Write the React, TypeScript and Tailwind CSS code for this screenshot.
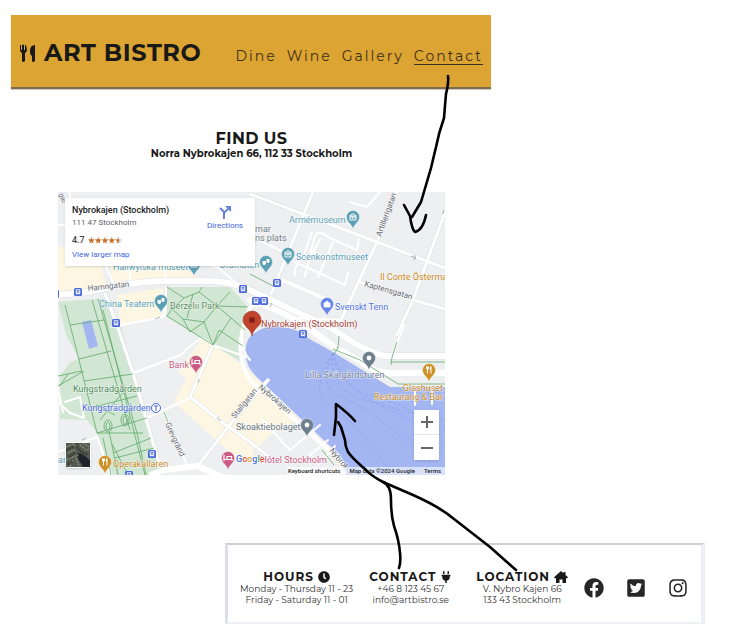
import React from "react";
import { FaClock, FaFacebook, FaInstagram, FaPlug, FaTwitterSquare } from "react-icons/fa";

const TEAL = "#5b9fb5";
const BLUE = "#4a68dd";
const GREY = "#6e7f8d";
const PINK = "#cb5c84";
const ORANGE = "#cf9027";

type PinProps = { x: number; y: number; color: string; kind: "museum" | "theatre" | "bed" | "food" | "dot" | "bag" };

function Pin({ x, y, color, kind }: PinProps) {
  return (
    <g transform={`translate(${x} ${y})`}>
      <path d="M0 12 C-1 7 -6.500 5 -6.500 0 A6.500 6.500 0 0 1 6.500 0 C6.500 5 1 7 0 12Z" fill={color} stroke="#fff" strokeWidth="0.400" />
      {kind === "museum" && <path d="M-3.500 -1 L0 -3.500 L3.500 -1Z M-3 0H3V3H-3Z M-1 1H1" fill="none" stroke="#fff" strokeWidth="1" />}
      {kind === "theatre" && <path d="M-3.500 -1H0V2Q-2 4 -3.500 2Z M0.500 -3H3.500V0Q2 2 0.500 0Z" fill="#fff" />}
      {kind === "bed" && <path d="M-4 -3V3M-4 1.500H4V3M-1 1V-1.500H3.500V1" fill="none" stroke="#fff" strokeWidth="1.200" />}
      {kind === "food" && <path d="M-2.500 -3.500V-1Q-1.500 0 -0.500 -1V-3.500M-1.500 -3.500V3.500M2 3.500V-3.500Q0.500 -2 1.500 0" fill="none" stroke="#fff" strokeWidth="1" />}
      {kind === "bag" && <path d="M-3 -1H3V3H-3ZM-1.500 -1Q0 -5 1.500 -1" fill="#fff" stroke="#fff" strokeWidth="0.800" />}
      {kind === "dot" && <circle r="2.400" fill="#fff" />}
    </g>
  );
}

function Stop({ x, y }: { x: number; y: number }) {
  return (
    <g transform={`translate(${x} ${y})`}>
      <rect x="-4" y="-4" width="8" height="8" rx="1.500" fill={BLUE} />
      <path d="M-1.800 -2.300H1.800V1.500H-1.800ZM-1.800 0H1.800M-1.300 1.500V2.600M1.300 1.500V2.600" fill="none" stroke="#fff" strokeWidth="0.900" />
    </g>
  );
}

type LabelProps = { x: number; y: number; color: string; children: string; rotate?: number; anchor?: "start" | "middle" | "end"; size?: number };

function Label({ x, y, color, children, rotate = 0, anchor = "start", size = 9 }: LabelProps) {
  return (
    <text
      transform={`translate(${x} ${y}) rotate(${rotate})`}
      fill={color}
      fontSize={size}
      textAnchor={anchor}
      stroke="#fff"
      strokeWidth="1.200"
      strokeOpacity="0.700"
      paintOrder="stroke"
      strokeLinejoin="round"
    >
      {children}
    </text>
  );
}

function CityMap() {
  return (
    <svg viewBox="58 192 387 283" className="block w-full font-['Roboto',sans-serif]" role="img" aria-label="Map of Nybrokajen, Stockholm">
      <rect x="58" y="192" width="387" height="283" fill="#eeeff1" />

      <g fill="#fcf6e3">
        <path d="M58 247H99L106 288L58 292Z" />
        <path d="M110 265H180L200 278L160 278L112 284Z" />
        <path d="M117 295L163 288V316L120 325Z" />
        <path d="M201 340L213 345L240 363L300 420L345 463L338 470L290 440L240 462L174 402L186 378L178 372Z" />
      </g>
      <path d="M252 452L278 428L300 420L330 452L345 475H262Z" fill="#eeeff1" />

      <g fill="#d2e6d4">
        <path d="M167 287H230L248 307L243 346L240 361L213 345L167 317Z" />
        <path d="M58 302L107 298L122 330L163 475H113L97 433L87 420L60 419V376L70 362L79 359L66 335Z" />
      </g>
      <path d="M249 338Q242 351 249 367Q253 374 262 382L330 446Q346 456 346 475H445V387H390L333 352L306 337Q298 328 280 327Q262 324 249 338Z" fill="#a4b6f2" />
      <path d="M82 322L91 320L98 346L89 349Z" fill="#a4b6f2" />

      <g fill="none" stroke="#dcdfe3" strokeLinecap="round" strokeLinejoin="round">
        <path strokeWidth="7" d="M50 295Q75 294 93 291Q123 283 160 281H200Q230 280 250 290L333 329Q365 352 385 356H450" />
        <path strokeWidth="4" d="M105 294L117 325L133 373L160 467M250 194L377 242L445 268M313 192L271 294M397 192L377 242L340 322M445 212L413 300L397 335M360 282L413 300L445 309M213 345L190 397L223 423L250 442L275 462M268 380L236 417L197 467" />
      </g>
      <g fill="none" stroke="#fff" strokeLinecap="round" strokeLinejoin="round">
        <g strokeWidth="6">
          <path d="M50 295Q75 294 93 291Q123 283 160 281H200Q230 280 250 290L333 329Q365 352 385 356H450" />
          <path d="M250 300Q280 310 303 324L333 346L360 361Q374 373 392 373H450" />
          <path d="M152 474L165 470L197 466L225 478" />
        </g>
        <g strokeWidth="3">
          <path d="M105 294L117 325L133 373L160 467" />
          <path d="M250 194L377 242L445 268" />
          <path d="M313 192L271 294" />
          <path d="M397 192L377 242L340 322" />
          <path d="M445 212L413 300L397 335" />
          <path d="M282 280L333 302" />
          <path d="M360 282L413 300L445 309" />
          <path d="M213 345L190 397L223 423L250 442L275 462" />
          <path d="M268 380L236 417L197 467" />
          <path d="M250 308Q231 350 250 380L343 463" strokeWidth="4" />
        </g>
        <g strokeWidth="2">
          <path d="M112 327L163 317Q166 313 166 288" />
          <path d="M133 373L181 355Q190 345 202 338L213 345" />
          <path d="M147 418L190 398M163 410L187 465" />
          <path d="M50 455L97 437L112 478M65 402L80 397L84 418L70 413L58 402" />
          <path d="M105 265L116 288M130 265V284M165 265V280M215 265L235 282" />
          <path d="M58 225H70V192M290 450L320 425M290 450L262 420M310 455L328 440M318 465L335 446" />
          <path d="M255 238L285 253M305 276L315 235Q320 230 328 237L357 250M295 262L345 285M320 239L307 266M333 242L318 277M310 251L330 258M345 285L348 273M357 250L359 239M295 275Q294 264 303 258L312 232" />
          <path d="M213 345L246 357M247 308Q263 302 282 311M295 318L340 320" />
          <path d="M380 192L367 207L350 202" />
          <path d="M393 355L404 325M250 360Q241 350 243 339" />
        </g>
        <path d="M188 268L206 263L217 268M58 388L63 412M415 387V405M432 387V404" strokeWidth="2" />
      </g>

      <g fill="none" stroke="#60aa69" strokeWidth="0.800">
        <path d="M167 287L184 298L199 292L217 306L204 322L183 319L172 309L184 298M199 292L202 287M217 306L230 292M217 306L248 307M204 322L213 345L231 318L217 306M183 319L190 332L204 322M172 309L167 316L213 345L219 330L243 346M231 318L245 330M193 294L187 318" />
        <path d="M65 305L80 364L97 433H143M92 300L130 430M98 299L137 433L146 475M70 325L104 320M79 359L111 351M84 381L133 374M58 386L84 371M58 376L82 371M94 407L137 396M97 433L147 418M113 453L151 438M118 475L109 431M128 475L112 444M103 310L145 475M100 420L125 390M96 405L115 415M115 458L154 448M60 386L68 374M103 438L111 475" />
        <ellipse cx="108" cy="426" rx="4" ry="6" /><ellipse cx="125" cy="420" rx="4" ry="6" />
        <ellipse cx="108" cy="426" rx="2" ry="4" /><ellipse cx="125" cy="420" rx="2" ry="4" />
        <path d="M250 274L273 286M333 349L360 360L398 384H445M391 365L392 357L397 342M391 362H445M338 348L339 336M334 355L338 347M164 412L168 422M322 450L334 465" />
      </g>
      <g fill="none" stroke="#7f97ec" strokeWidth="0.600" strokeDasharray="3 2">
        <path d="M333 353Q308 392 330 405T387 467" />
        <path d="M333 353Q316 388 342 397T430 462" />
        <path d="M333 353Q328 390 365 400T445 445" />
        <path d="M333 353Q338 387 370 395T445 430" />
        <path d="M333 353Q340 378 360 393T445 420" />
      </g>

      <Label x={88} y={291} color="#62666d" rotate={-6} size={8}>Hamngatan</Label>
      <Label x={381} y={237} color="#62666d" rotate={-70} size={8}>Artillerigatan</Label>
      <Label x={364} y={286} color="#62666d" rotate={16} size={8}>Kaptensgatan</Label>
      <Label x={258} y={388} color="#62666d" rotate={41} size={8}>Nybrokajen</Label>
      <Label x={329} y={451} color="#62666d" rotate={50} size={8}>Nybrok</Label>
      <Label x={235} y={419} color="#62666d" rotate={-51} size={8}>Stallgatan</Label>
      <Label x={165} y={424} color="#62666d" rotate={65} size={8}>Grevgränd</Label>
      <Label x={59} y={194} color="#62666d" rotate={72} size={7}>gat</Label>
      <Label x={113} y={270} color={TEAL}>Hallwylska museet</Label>
      <Label x={220} y={268} color={TEAL}>Dramaten</Label>
      <Label x={99} y={307} color={TEAL}>China Teatern</Label>
      <Label x={170} y={309} color="#5a8d60">Berzelii Park</Label>
      <Label x={289} y={223} color={TEAL}>Armémuseum</Label>
      <Label x={296} y={260} color={TEAL}>Scenkonstmuseet</Label>
      <Label x={255} y={232} color="#6f7b84">mar</Label>
      <Label x={255} y={241} color="#6f7b84">ns plats</Label>
      <Label x={380} y={280} color="#c88924" size={9}>Il Conte Österma</Label>
      <Label x={335} y={310} color="#5272e4">Svenskt Tenn</Label>
      <Label x={261} y={327} color="#a83d34">Nybrokajen (Stockholm)</Label>
      <Label x={169} y={368} color={PINK}>Bank</Label>
      <Label x={73} y={392} color="#4e8856">Kungsträdgården</Label>
      <Label x={82} y={411} color={BLUE}>Kungsträdgården</Label>
      <Label x={305} y={378} color="#71809a">Lilla Skärgårdsturen</Label>
      <Label x={236} y={430} color="#667784">Skoaktiebolaget</Label>
      <Label x={443} y={391} color="#c88924" anchor="end">Glashuset</Label>
      <Label x={443} y={400} color="#c88924" anchor="end">Restaurang &amp; Bar</Label>
      <Label x={113} y={467} color="#c88924">Operakällaren</Label>
      <Label x={58} y={463} color={TEAL}>ar</Label>
      <Label x={327} y={463} color={PINK} anchor="end">Hôtel Stockholm</Label>
      <text x="236" y="462" fontSize="9" fontWeight="500" stroke="#fff" strokeWidth="1" paintOrder="stroke">
        <tspan fill="#4b70dd">G</tspan><tspan fill="#d65343">o</tspan><tspan fill="#d9a429">o</tspan><tspan fill="#4b70dd">g</tspan><tspan fill="#469b57">l</tspan><tspan fill="#d65343">e</tspan>
      </text>

      <Pin x={194} y={264} color={TEAL} kind="museum" />
      <Pin x={266} y={262} color={TEAL} kind="theatre" />
      <Pin x={161} y={301} color={TEAL} kind="theatre" />
      <Pin x={353} y={217} color={TEAL} kind="museum" />
      <Pin x={288} y={254} color={TEAL} kind="museum" />
      <Pin x={327} y={304} color="#6687e8" kind="bag" />
      <Pin x={196} y={362} color={PINK} kind="bed" />
      <Pin x={228} y={458} color={PINK} kind="bed" />
      <Pin x={105} y={462} color={ORANGE} kind="food" />
      <Pin x={429} y={370} color={ORANGE} kind="food" />
      <Pin x={369} y={358} color={GREY} kind="dot" />
      <Pin x={307} y={425} color={GREY} kind="dot" />
      <Stop x={78} y={292} /><Stop x={116} y={323} /><Stop x={243} y={289} />
      <Stop x={277} y={283} /><Stop x={256} y={301} /><Stop x={264} y={301} />
      <Stop x={303} y={334} /><Stop x={152} y={454} /><Stop x={129} y={475} /><Stop x={55} y={294} />
      <circle cx="156" cy="408" r="4.500" fill="#fff" stroke={BLUE} />
      <path d="M154 406H158M156 406V411" stroke={BLUE} />
      <path d="M252 336C251 328 243 327 243 320A9 9 0 0 1 261 320C261 327 253 328 252 336Z" fill="#c2432d" stroke="#8e2e20" strokeWidth="0.500" />
      <circle cx="252" cy="320" r="3" fill="#7c2118" />
      <g fill="none" stroke="#9aa0a6" strokeWidth="0.800">
        <path d="M411 256L416 258M414 255L416 258L413 260M443 214L444 210M198 383L199 379M217 418L221 421M82 440L86 438M155 319L160 317M270 307L272 303" />
      </g>
    </svg>
  );
}

function Satellite() {
  return (
    <svg viewBox="0 0 24 24" className="size-full" aria-hidden="true">
      <rect width="24" height="24" fill="#55584f" />
      <path d="M10 10L16 11L24 17V24H17L13 17Z" fill="#1c252c" />
      <path d="M0 4L8 1L13 4M2 10L8 7L12 13M0 17L9 13L13 23M4 24L7 17M14 2L20 7L24 6M17 0L23 4" fill="none" stroke="#888b7d" strokeWidth="1.500" strokeDasharray="2 1" />
      <path d="M0 7L7 4M3 14L10 9M14 8L22 12M2 21L7 19M10 0L13 7" fill="none" stroke="#343932" strokeWidth="2" strokeDasharray="2 1" />
    </svg>
  );
}

function Stars() {
  const star = "M5 0L6.300 3.300L10 3.600L7.200 6L8 9.500L5 7.600L2 9.500L2.800 6L0 3.600L3.700 3.300Z";
  return (
    <svg viewBox="0 0 50 10" className="h-[7px] w-[34px]" role="img" aria-label="4.7 stars">
      {[0, 10, 20, 30].map((x) => <path key={x} d={star} transform={`translate(${x} 0)`} fill="#c8732d" />)}
      <path d={star} transform="translate(40 0)" fill="#c9c5c1" />
      <path d="M45 0L43.700 3.300L40 3.600L42.800 6L42 9.500L45 7.600Z" fill="#c8732d" />
    </svg>
  );
}

function PlaceCard() {
  return (
    <div className="absolute left-[7px] top-[6px] flex h-[68px] w-[190px] justify-between bg-white px-[7px] pt-[6px] shadow-sm">
      <div className="flex flex-col items-start text-[9px] leading-3">
        <strong className="font-medium text-[#202124]">Nybrokajen (Stockholm)</strong>
        <span className="mt-px text-[8px] text-[#5f6368]">111 47 Stockholm</span>
        <span className="mt-[5px] flex items-center gap-[3px] font-medium text-[#444]">4.7 <Stars /></span>
        <a href="#larger-map" className="mt-[3px] text-[8px] text-[#4466df]">View larger map</a>
      </div>
      <a href="#directions" className="mr-[5px] mt-[2px] flex flex-col items-center text-[8px] leading-[14px] text-[#4466df]">
        <svg viewBox="0 0 12 13" className="h-[13px] w-3" aria-hidden="true">
          <path d="M1 2L5 6V13M5 8Q5 6 8 4L10 2" fill="none" stroke="#6681db" strokeWidth="2" />
          <path d="M6 0H12V6Z" fill="#6681db" />
        </svg>
        Directions
      </a>
    </div>
  );
}

function HouseIcon() {
  return (
    <svg viewBox="0 0 14 12" className="h-3 w-[14px]" fill="currentColor" aria-hidden="true">
      <path d="M7 0L9.500 2.200V1H11.500V4L14 6.300L13.300 7.200H12V12H8.500V8.500H5.500V12H2V7.200H0.700L0 6.300Z" />
    </svg>
  );
}

function FooterInfo({ title, icon, lines }: { title: string; icon: React.ReactNode; lines: string[] }) {
  return (
    <section className="whitespace-nowrap text-center text-[9px] leading-[11px] text-[#333]">
      <h2 className="flex items-center justify-center gap-1 text-[12px] font-bold leading-[13px] tracking-[1px] text-[#191919]">{title}{icon}</h2>
      {lines.map((line) => <p key={line}>{line}</p>)}
    </section>
  );
}

function FlowArrows() {
  return (
    <svg viewBox="0 0 730 644" className="pointer-events-none absolute left-0 top-0 h-[644px] w-[730px]" fill="none" stroke="#000" strokeWidth="2.600" strokeLinecap="round" strokeLinejoin="round" aria-hidden="true">
      <path d="M448 76Q449 82 446 94Q445 105 444 118Q439 132 436 147L431 168L421 202L412 217" />
      <path d="M404 205L410 216Q412 230 415 232Q423 230 426 215" />
      <path d="M516 570L490 547L454 519Q440 507 413 495L383 482Q370 475 366 470Q352 458 348 452Q345 446 345 440L341 427L338 422" />
      <path d="M355 421Q348 413 336 404L336 417L334 435" />
      <path d="M383 482Q391 485 391 500Q391 515 394 526Q399 540 400 553Q401 562 399 568" />
    </svg>
  );
}

export default function App() {
  return (
    <div className="relative bg-white pb-5 pl-[11px] pt-[15px] font-['Montserrat','Inter',sans-serif] text-[#191919]">
      <div className="max-w-[480px]">
        <header className="flex h-[74px] items-center justify-between border-b-2 border-[#806c4c] bg-[#dca432] px-2 shadow-[0_1px_1px_#ccc]">
          <div className="flex items-center gap-2 whitespace-nowrap pt-1">
            <svg viewBox="0 0 17 18" className="h-[18px] w-[17px]" fill="#191919" aria-hidden="true">
              <path d="M1 1Q2 0 2 2V6H3V1Q4 0 5 1V6H6V2Q6 0 7 1L8 6Q8 8 6 9V17Q4 19 3 17V9Q1 8 1 6Z" />
              <path d="M16 1V17Q14 19 13 17V12Q11 11 11 7Q11 1 16 1Z" />
            </svg>
            <h1 className="text-[24px] font-bold leading-8 tracking-wide">ART BISTRO</h1>
          </div>
          <nav className="flex gap-[10px] pt-[11px] text-[14px] leading-4 tracking-[2px] text-[#3c3018]">
            <a href="#dine">Dine</a>
            <a href="#wine">Wine</a>
            <a href="#gallery">Gallery</a>
            <a href="#contact" className="border-b border-[#3c3018]">Contact</a>
          </nav>
        </header>

        <main className="pl-[47px] pr-[46px] pt-[41px]">
          <div className="text-center">
            <h2 className="text-[16px] font-bold leading-[18px] tracking-wide">FIND US</h2>
            <p className="text-[10px] font-bold leading-3">Norra Nybrokajen 66, 112 33 Stockholm</p>
          </div>
          <div className="relative mt-8 overflow-hidden font-['Roboto',sans-serif]">
            <CityMap />
            <PlaceCard />
            <button aria-label="Satellite view" className="absolute bottom-[7px] left-[7px] size-[26px] rounded-sm border border-white shadow"><Satellite /></button>
            <div className="absolute bottom-[15px] right-[6px] flex w-[25px] flex-col divide-y divide-gray-200 bg-white shadow">
              <button aria-label="Zoom in" className="flex h-[25px] items-center justify-center"><svg viewBox="0 0 12 12" className="size-3"><path d="M0 6H12M6 0V12" stroke="#666" strokeWidth="2" /></svg></button>
              <button aria-label="Zoom out" className="flex h-[25px] items-center justify-center"><svg viewBox="0 0 12 12" className="size-3"><path d="M0 6H12" stroke="#666" strokeWidth="2" /></svg></button>
            </div>
            <div className="absolute bottom-0 right-0 flex h-2 items-center gap-[9px] bg-white/60 pl-px pr-1 text-[6px] font-medium leading-2 text-[#222]">
              <button>Keyboard shortcuts</button>
              <span>Map data ©2024 Google</span>
              <a href="#terms">Terms</a>
            </div>
          </div>
        </main>
      </div>

      <footer className="ml-[214px] mt-[68px] flex h-[81px] max-w-[480px] items-center border-2 border-l-[3px] border-r-4 border-[#eeeef6] border-l-[#dedee9] border-t-[#d0d0d3] pl-3 pt-2">
        <div className="flex gap-4">
          <FooterInfo title="HOURS" icon={<FaClock />} lines={["Monday - Thursday 11 - 23", "Friday - Saturday 11 - 01"]} />
          <FooterInfo title="CONTACT" icon={<FaPlug className="size-3" />} lines={["+46 8 123 45 67", "info@artbistro.se"]} />
        </div>
        <div className="ml-6">
          <FooterInfo title="LOCATION" icon={<HouseIcon />} lines={["V. Nybro Kajen 66", "133 43 Stockholm"]} />
        </div>
        <div className="ml-4 flex gap-[22px] text-[#272727]">
          <a href="#facebook" aria-label="Facebook"><FaFacebook className="size-5" /></a>
          <a href="#twitter" aria-label="Twitter"><FaTwitterSquare className="size-5" /></a>
          <a href="#instagram" aria-label="Instagram"><FaInstagram className="size-5" /></a>
        </div>
      </footer>
      <FlowArrows />
    </div>
  );
}
